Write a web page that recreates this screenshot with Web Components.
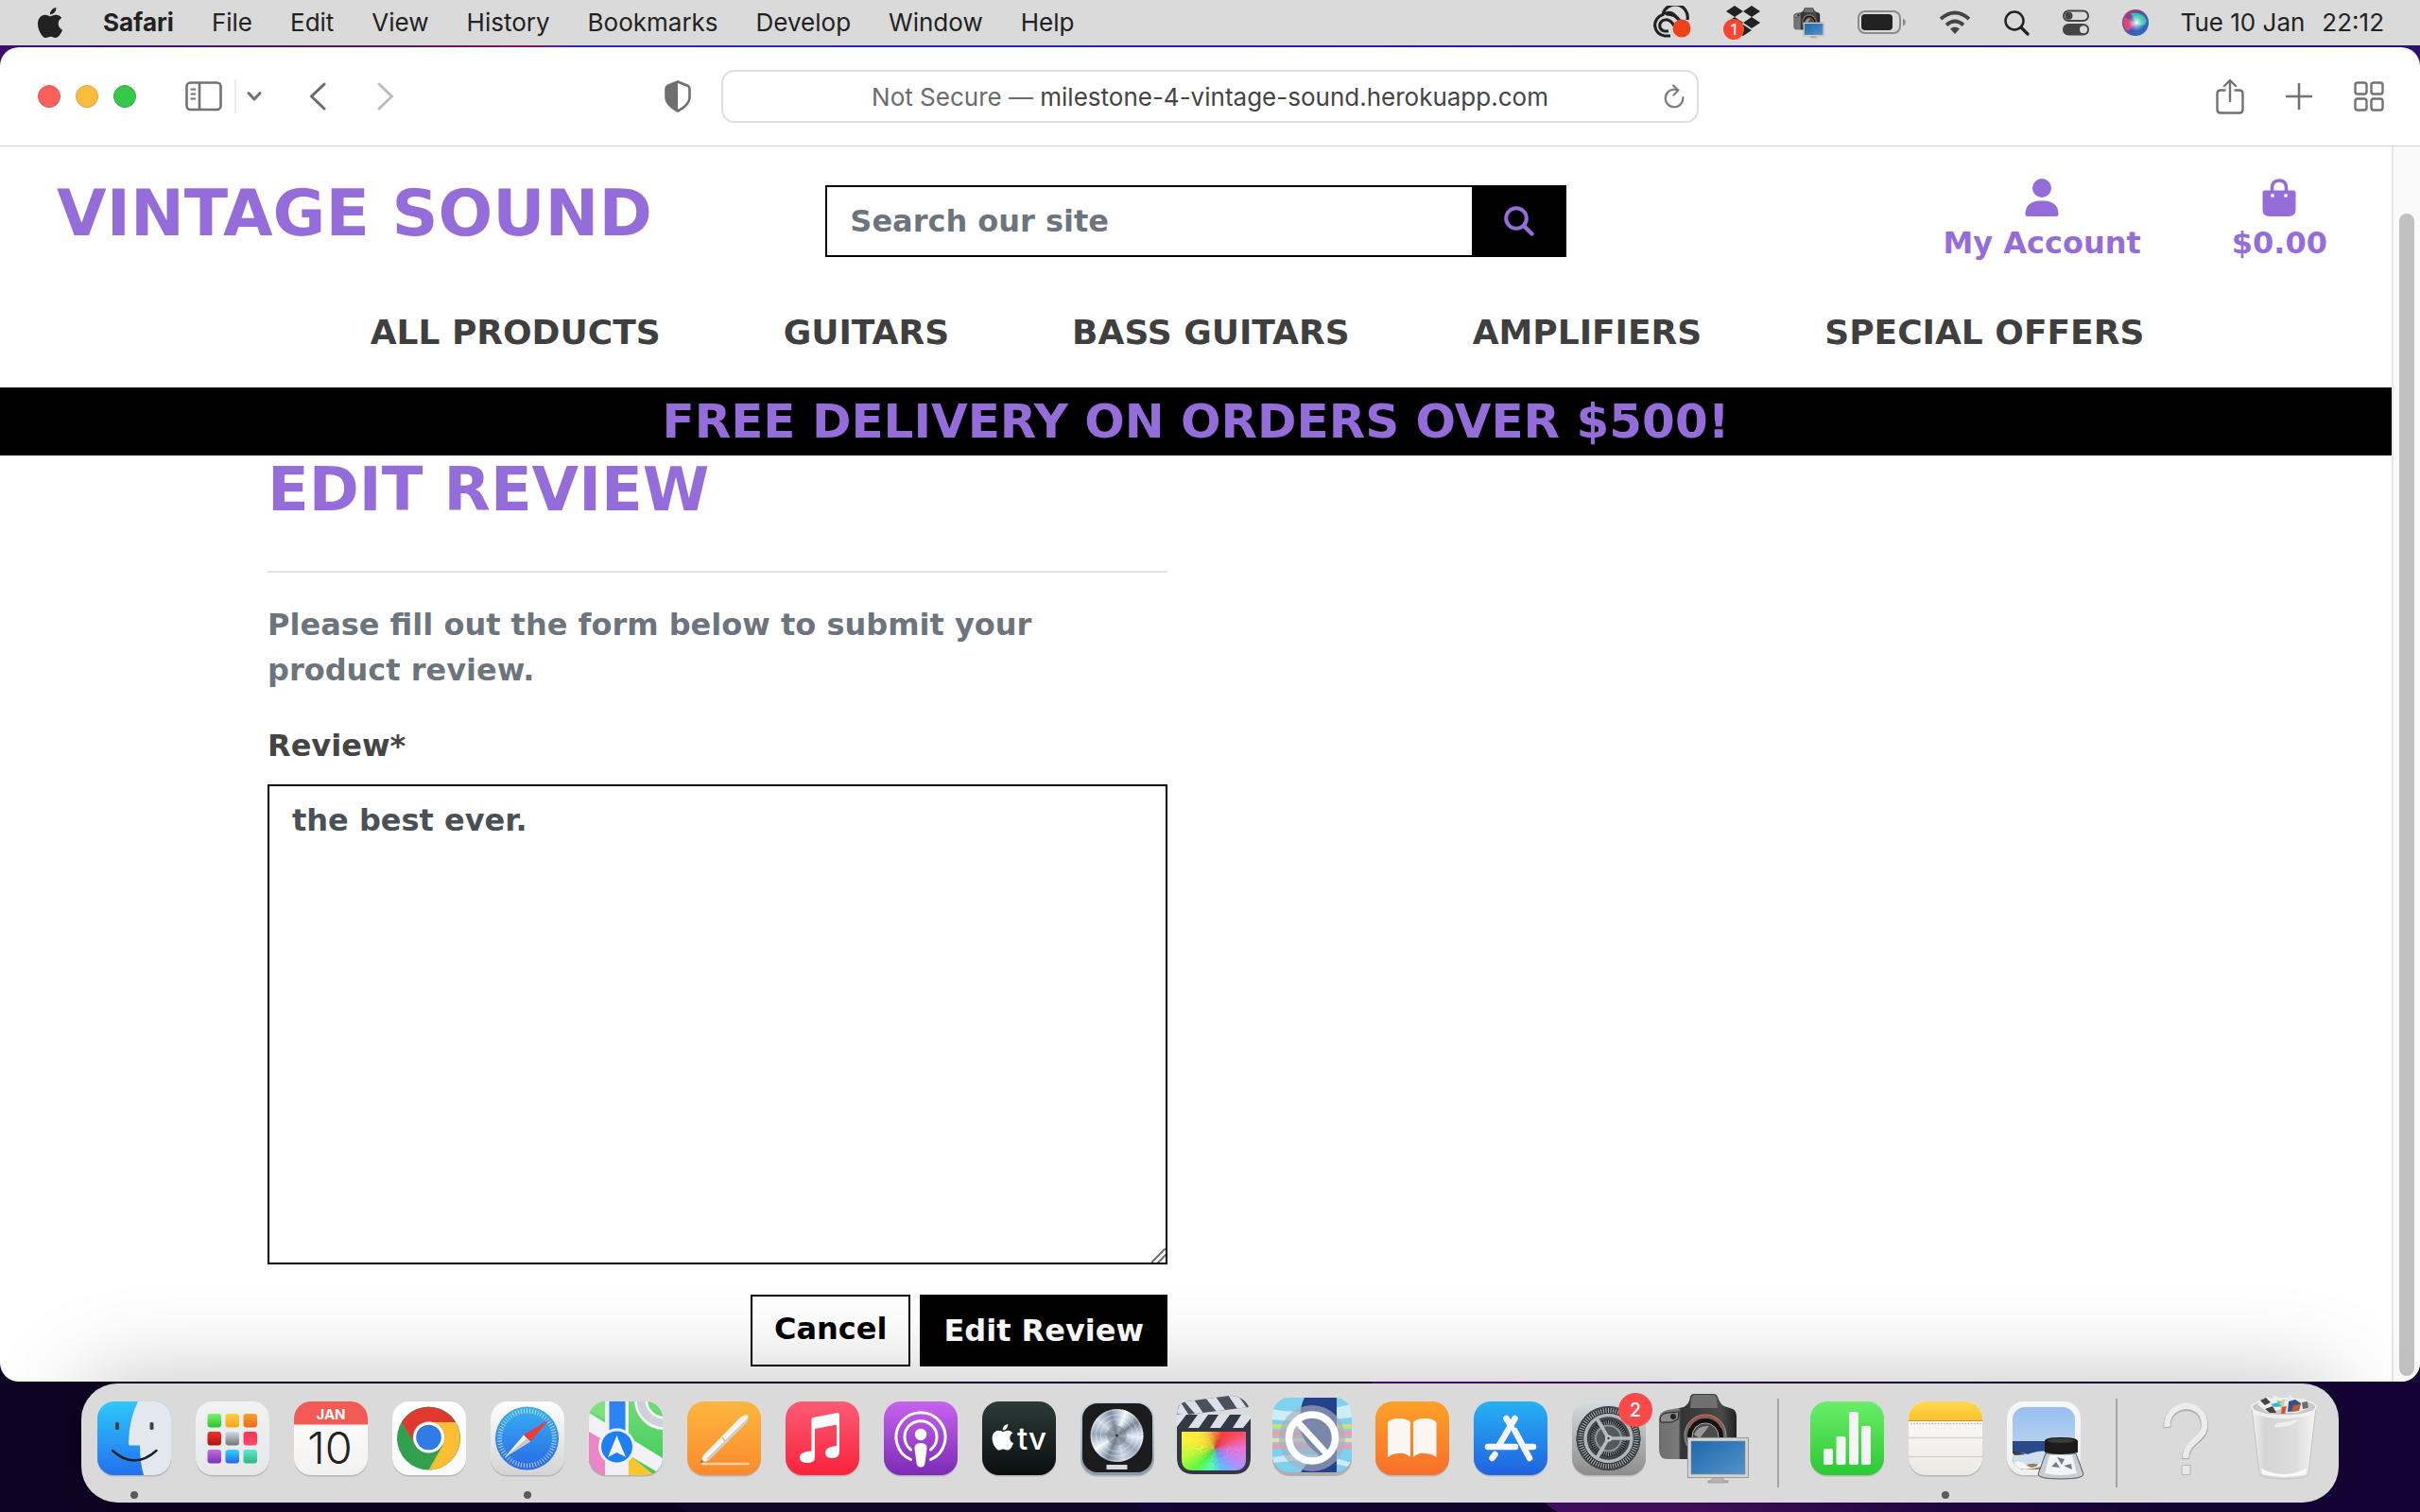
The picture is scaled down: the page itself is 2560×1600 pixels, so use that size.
<!DOCTYPE html>
<html lang="en">
<head>
<meta charset="utf-8">
<title>Vintage Sound</title>
<style>
  html, body { margin: 0; height: 100%; }
  body { font-family: Inter, "Liberation Sans", sans-serif; }
</style>
</head>
<body>
<mac-desktop>
  <mac-menubar slot="menu"></mac-menubar>
  <browser-window>
    <browser-toolbar slot="toolbar"></browser-toolbar>
    <shop-header></shop-header>
    <promo-banner>FREE DELIVERY ON ORDERS OVER $500!</promo-banner>
    <review-form></review-form>
  </browser-window>
  <mac-dock slot="dock"></mac-dock>
</mac-desktop>

<script>
const APPLE = '<path d="M12.152 6.896c-.948 0-2.415-1.078-3.96-1.04-2.04.027-3.91 1.183-4.961 3.014-2.117 3.675-.546 9.103 1.519 12.09 1.013 1.454 2.208 3.09 3.792 3.039 1.52-.065 2.09-.987 3.935-.987 1.831 0 2.35.987 3.96.948 1.637-.026 2.676-1.48 3.676-2.948 1.156-1.688 1.636-3.325 1.662-3.415-.039-.013-3.182-1.221-3.22-4.857-.026-3.04 2.48-4.494 2.597-4.559-1.429-2.09-3.623-2.324-4.39-2.376-2-.156-3.675 1.09-4.61 1.09zM15.53 3.83c.843-1.012 1.4-2.427 1.245-3.83-1.207.052-2.662.805-3.532 1.818-.78.896-1.454 2.338-1.273 3.714 1.338.104 2.715-.688 3.559-1.701"/>';

const CAMERA = `
  <linearGradient id="cb" x2="1"><stop offset="0" stop-color="#6e6e6e"/><stop offset=".25" stop-color="#7a7a7a"/><stop offset=".28" stop-color="#333"/><stop offset=".8" stop-color="#4a4a4a"/><stop offset="1" stop-color="#222"/></linearGradient>
  <linearGradient id="cs" x2="1" y2="1"><stop offset="0" stop-color="#1c69ad"/><stop offset="1" stop-color="#5592c9"/></linearGradient>
  <path d="M1 38Q1 30 10 28L27 25Q33 22 34 14Q35 11 38 11H59Q62 11 63 14Q66 24 73 25L79 27Q83 29 83 36V80H10Q1 80 1 70Z" fill="url(#cb)"/>
  <path d="M35 15Q36 12 39 12H58Q61 12 62 16L63 26H34Z" fill="#707070"/>
  <path d="M2 38Q3 32 10 31L22 30L21 38L14 41H3Z" fill="#8b8b8b" stroke="#222"/><circle cx="16" cy="35" r="3" fill="#222"/>
  <circle cx="50" cy="55" r="22" fill="#666" stroke="#999" stroke-width="1"/><circle cx="50" cy="56" r="19" fill="#111"/>
  <path d="M33 47Q38 34 50 34Q62 34 67 47" fill="none" stroke="#d5492a" stroke-width="1.6"/>
  <circle cx="50" cy="56" r="14" fill="#4b4b4b" stroke="#aaa" stroke-width="1"/><path d="M38 54Q42 44 54 45L44 58Z" fill="#999"/>
  <path d="M58 99H68L70 103H74V105H53V103H56Z" fill="#b5b5b5" stroke="#888" stroke-width=".6"/>
  <rect x="31.500" y="57.500" width="64" height="42" fill="#d4d4d4" stroke="#999"/><rect x="35" y="61" width="57" height="35" fill="url(#cs)" stroke="#888" stroke-width=".6"/>`;

const ICONS = {
  apple: [32, 32, '0 0 24 24', `<g fill="#222">${APPLE}</g>`],
  cc: [42, 36, '0 0 42 36', `<g fill="none" stroke="#222" stroke-width="3.200"><path d="M20 32H14A11.500 11.500 0 0 1 12 9.500A13 13 0 0 1 38 15"/><path d="M14 9Q21 4 28 14"/><path d="M18 27H14.500A6 6 0 0 1 15 15Q19 14 24 21"/><path d="M16 9Q25 9 30 16"/></g><circle cx="32" cy="24" r="9.500" fill="#ee421b"/>`],
  dropbox: [40, 36, '0 0 40 36', `<g fill="#222"><path d="M12 0l9 6-9 6-9-6zM30 0l9 6-9 6-9-6zM12 12l9 6-9 6-9-6zM30 12l9 6-9 6-9-6zM21 20l9 6-9 6-9-6z"/></g><circle cx="11" cy="25" r="11" fill="#fb452e"/><text x="11" y="31" text-anchor="middle" font-family="Inter, sans-serif" font-size="16" font-weight="500" fill="#fff">1</text>`],
  camera: [34, 34, '0 8 100 100', CAMERA],
  battery: [52, 26, '0 0 52 26', `<rect x="1" y="1" width="44" height="23" rx="7" fill="none" stroke="#8b8b8b" stroke-width="2"/><rect x="4" y="4" width="33" height="17" rx="4" fill="#222"/><path d="M48 8.500Q51 10 51 12.500T48 16.500Z" fill="#8b8b8b"/>`],
  wifi: [34, 26, '0 0 34 26', `<g fill="none" stroke="#444" stroke-width="4"><path d="M2 9Q17-4 32 9"/><path d="M8 15.500Q17 7.500 26 15.500"/></g><path d="M17 25L12 19.500Q17 15.500 22 19.500Z" fill="#444"/>`],
  spot: [28, 28, '0 0 28 28', `<circle cx="12" cy="12" r="9.500" fill="none" stroke="#222" stroke-width="2.500"/><path d="M19 19L26 26" stroke="#222" stroke-width="3.200" stroke-linecap="round"/>`],
  control: [30, 28, '0 0 30 28', `<rect x="2" y="1.500" width="26" height="10.500" rx="5.250" fill="none" stroke="#444" stroke-width="2"/><circle cx="7.500" cy="6.700" r="4" fill="#444"/><rect x="1" y="15" width="28" height="12.500" rx="6.250" fill="#444"/><circle cx="23" cy="21.200" r="4" fill="#dadada"/>`],
  siri: [28, 28, '0 0 28 28', `<defs><linearGradient id="a" x2="1" y2="1"><stop offset="0" stop-color="#d52f5e"/><stop offset=".4" stop-color="#5a4fa0"/><stop offset="1" stop-color="#1b73d4"/></linearGradient><radialGradient id="b"><stop offset="0" stop-color="#fff"/><stop offset="1" stop-color="#8ce8ee" stop-opacity="0"/></radialGradient></defs><circle cx="14" cy="14" r="14" fill="url(#a)"/><path d="M9 4Q22 2 26 12Q24 20 15 15Z" fill="#38c3a4"/><path d="M3 8Q8 12 14 14Q8 24 4 22Q-1 15 3 8" fill="#e0437d"/><circle cx="15" cy="14" r="9" fill="url(#b)"/>`],
  sidebar: [40, 32, '0 0 40 32', `<g fill="none" stroke="#727272" stroke-width="2.600"><rect x="1.500" y="1.500" width="36" height="28.500" rx="4"/><path d="M15 2V30"/><path d="M5.500 8.500H11M5.500 13.500H11M5.500 18.500H11" stroke-width="2"/></g>`],
  chevron: [16, 12, '0 0 16 12', '<path d="M2 2.500L8 9L14 2.500" fill="none" stroke="#727272" stroke-width="3" stroke-linecap="round" stroke-linejoin="round"/>'],
  back: [18, 30, '0 0 18 30', '<path d="M16 2L2.500 15L16 28" fill="none" stroke="#6b6b6b" stroke-width="3" stroke-linecap="round" stroke-linejoin="round"/>'],
  forward: [18, 30, '0 0 18 30', '<path d="M2 2L15.500 15L2 28" fill="none" stroke="#bcbcbc" stroke-width="3" stroke-linecap="round" stroke-linejoin="round"/>'],
  shield: [28, 34, '0 0 28 34', '<path d="M14 1.500L25 6Q26.500 7 26.500 9V18Q26.500 26 14 32.500Q1.500 26 1.500 18V9Q1.500 7 3 6Z" fill="none" stroke="#6f6f6f" stroke-width="2.600"/><path d="M14 1.500V32.500Q1.500 26 1.500 18V9Q1.500 7 3 6Z" fill="#6f6f6f"/>'],
  reload: [22, 26, '0 0 22 26', '<path d="M13.500 6A9.300 9.300 0 1 0 20.300 14" fill="none" stroke="#7c7c7c" stroke-width="2.200" stroke-linecap="round"/><path d="M10 1.500L15.500 6.500L10.500 11.500" fill="none" stroke="#7c7c7c" stroke-width="2.200" stroke-linecap="round" stroke-linejoin="round"/>'],
  share: [30, 38, '0 0 30 38', '<g fill="none" stroke="#727272" stroke-width="2.400" stroke-linecap="round" stroke-linejoin="round"><path d="M9.500 12.500H5Q1.500 12.500 1.500 16V33Q1.500 36.500 5 36.500H25Q28.500 36.500 28.500 33V16Q28.500 12.500 25 12.500H20.500"/><path d="M15 24V2M9 8L15 2L21 8"/></g>'],
  plus: [28, 28, '0 0 28 28', '<path d="M14 1V27M1 14H27" stroke="#727272" stroke-width="2.600" stroke-linecap="round"/>'],
  tabs: [32, 32, '0 0 32 32', '<g fill="none" stroke="#727272" stroke-width="2.400"><rect x="1.500" y="1.500" width="12" height="12" rx="2.500"/><rect x="18.500" y="1.500" width="12" height="12" rx="2.500"/><rect x="1.500" y="18.500" width="12" height="12" rx="2.500"/><rect x="18.500" y="18.500" width="12" height="12" rx="2.500"/></g>'],
  search: [32, 32, '0 0 32 32', '<circle cx="13" cy="13" r="10.800" fill="none" stroke="#956ddb" stroke-width="4"/><path d="M21 21L29.500 29.500" stroke="#956ddb" stroke-width="4.400" stroke-linecap="round"/>'],
  user: [36, 40, '0 0 36 40', '<circle cx="18" cy="10" r="10" fill="#956ddb"/><path d="M14.500 23.500H21.500Q35.500 25 35.500 37.500Q35.500 40 33 40H3Q.5 40 .5 37.500Q.5 25 14.500 23.500Z" fill="#956ddb"/>'],
  bag: [36, 40, '0 0 36 40', '<path d="M10.500 17V10Q10.500 2 18 2T25.500 10V17" fill="none" stroke="#956ddb" stroke-width="3.600"/><path d="M3 12.500H33Q35.500 12.500 35.500 15V32.500Q35.500 40 28 40H8Q.5 40 .5 32.500V15Q.5 12.500 3 12.500Z" fill="#956ddb"/><circle cx="11" cy="18" r="1.900" fill="#fff"/><circle cx="25" cy="18" r="1.900" fill="#fff"/>']
};

/* Shapes for the dock. Each is drawn on a 104 x 126 cell; tile() shifts to the rounded 78px tile. */
const grad = (id, a, b) => `<linearGradient id="${id}" x2="0" y2="1"><stop offset="0" stop-color="${a}"/><stop offset="1" stop-color="${b}"/></linearGradient>`;
const tile = (a, b, inner) => `<defs>${grad('t', a, b)}<clipPath id="c"><rect width="78" height="78" rx="18"/></clipPath></defs>
  <g transform="translate(13 19)"><rect y="1.500" width="78" height="78" rx="18" fill="#000" opacity=".16"/><rect width="78" height="78" rx="18" fill="url(#t)"/><g clip-path="url(#c)">${inner}</g></g>`;
const ticks = (cx, cy, r1, r2, n, color, w) => Array.from({length: n}, (_, i) => {
  const a = i * 2 * Math.PI / n, c = Math.cos(a), s = Math.sin(a);
  return `<path d="M${cx + r1 * c} ${cy + r1 * s}L${cx + r2 * c} ${cy + r2 * s}" stroke="${color}" stroke-width="${w}"/>`;
}).join('');
const wedges = (cx, cy, r, n, color) => Array.from({length: n}, (_, i) => {
  const a = i * 2 * Math.PI / n, b = (i + 1.3) * 2 * Math.PI / n;
  return `<path d="M${cx} ${cy}L${cx + r * Math.cos(a)} ${cy + r * Math.sin(a)}L${cx + r * Math.cos(b)} ${cy + r * Math.sin(b)}Z" fill="${color(i / n)}"/>`;
}).join('');
const mix = stops => t => {
  const k = t * (stops.length - 1), i = Math.floor(k), f = k - i;
  return 'rgb(' + stops[i].map((v, j) => Math.round(v + ((stops[i + 1] || stops[i])[j] - v) * f)).join(',') + ')';
};
const spectrum = mix([[230,120,220],[175,145,255],[105,185,255],[90,255,190],[90,250,70],[190,250,60],[255,240,60],[255,230,60],[255,160,60],[255,60,60],[255,75,100],[230,120,220]]);
const steel = mix([[235,242,250],[150,165,185],[205,215,228],[120,135,155],[245,250,255],[150,165,185],[210,220,230],[130,145,165],[245,250,255],[120,135,155],[235,242,250]]);

const padColors = [['#7df06c','#2cc32e'],['#ffd33a','#f9a224'],['#fba12c','#e9681f'],['#f2332c','#ad1414'],['#cfdbe2','#6e7678'],['#fc3158','#fb4a6a'],['#c46be8','#7a34b0'],['#2fd5fc','#2763f0'],['#64e4dc','#2bb874']];

const APPS = {
  Finder: tile('#2fc9fa', '#2270ef', `<path d="M43 0Q33 20 33 45Q33 46.500 35 46.500H45Q45 65 49 78H78V0Z" fill="#e3e8ef"/><g fill="#3d444b"><rect x="19" y="22" width="4" height="8" rx="1.500"/><rect x="55.500" y="22" width="4" height="8" rx="1.500"/></g><path d="M16 52Q39 73 62.500 52" fill="none" stroke="#1b2128" stroke-width="2.400" stroke-linecap="round"/>`),
  Launchpad: tile('#f0f2f3', '#e6e7e8', padColors.map((p, i) => `<defs>${grad('p' + i, p[0], p[1])}</defs><rect x="${12.5 + (i % 3) * 19}" y="${13 + Math.floor(i / 3) * 19}" width="14.500" height="14.500" rx="3" fill="url(#p${i})"/>`).join('')),
  Calendar: tile('#ffffff', '#f4f2f0', `<rect width="78" height="24.500" fill="#f45a55"/><text x="39" y="19" text-anchor="middle" font-family="Inter, sans-serif" font-size="15" font-weight="700" fill="#fff">JAN</text><text x="38" y="66" text-anchor="middle" font-family="Inter, sans-serif" font-size="47" font-weight="300" fill="#222">10</text>`),
  Chrome: tile('#ffffff', '#fafafa', `<circle cx="38.500" cy="39" r="33.500" fill="#33a04f"/><path d="M38.500 39L10 22A33.500 33.500 0 0 1 67 22Z" fill="#e0392f"/><path d="M10 22L26 48L38 28Z" fill="#e0392f"/><path d="M38.500 22H67A33.500 33.500 0 0 1 38.500 72.500L53 47Z" fill="#fbbd31"/><circle cx="38.500" cy="38" r="16.500" fill="#fff"/><circle cx="38.500" cy="38" r="13.300" fill="#2f7ce8"/>`),
  Safari: tile('#ffffff', '#d4d4d4', `<defs>${grad('s', '#36b0f2', '#2a68e6')}</defs><circle cx="38.500" cy="39" r="33.500" fill="url(#s)"/>${ticks(38.5, 39, 26.5, 31.500, 60, '#d5eaff', .9)}<path d="M62 19L35 35.500L42 42.500Z" fill="#ee3b34"/><path d="M15 59L35 35.500L42 42.500Z" fill="#f2f2f2"/><path d="M15 59L42 42.500L38.500 39Z" fill="#c4c9ce"/>`),
  Maps: tile('#6fdc77', '#3fca58', `<path d="M0 30L22 44V78H0Z" fill="#e886c8"/><path d="M0 12L78 60V78L0 32Z" fill="#f1f1f6"/><path d="M0 0H17V19L0 10Z" fill="#7de07c"/><rect x="17" width="25" height="78" fill="#eef0f4"/><rect x="21.500" width="17" height="40" fill="#2b83f4"/><path d="M42 56L69 78H42Z" fill="#fbc52e"/><circle cx="80" cy="-2" r="25" fill="none" stroke="#fff" stroke-width="14"/><circle cx="80" cy="-2" r="25" fill="none" stroke="#cdd1da" stroke-width="9"/><circle cx="29.500" cy="48" r="19.500" fill="#eff1f5"/><circle cx="29.500" cy="48" r="16.500" fill="#1e7ff2"/><path d="M29.500 36L39 59L29.500 54L20 59Z" fill="#f4f4f4"/>`),
  Pages: tile('#fdb73e', '#fb8a2e', `<path d="M16 66H65" stroke="#ffd09b" stroke-width="2.500" stroke-linecap="round"/><path d="M13 66L17 57L56 17Q62 13 64 15Q66 18 60 25L23 62Z" fill="#f7f5f2"/><path d="M37 38L41 43" stroke="#a9a39d" stroke-width="1.200"/><path d="M13 66L15 61L18 64Z" fill="#8a7a68"/><path d="M23 62L60 25Q64 20 64.500 17L20 61Z" fill="#d0ccc8"/>`),
  Music: tile('#fb5c74', '#fa233b', `<path d="M27.500 18.500Q27.500 17.500 29 17L55 12Q57 12 57 13.500V53Q57 60 49.500 60Q42 60 42 54Q42 48 54 47V24.500L31 29V59Q31 65 23 65Q15 65 15 59Q15 53 27.500 52.500Z" fill="#fff"/>`),
  Podcasts: tile('#c763ee', '#7a2bb5', `<g fill="none" stroke="#fff" stroke-width="3" stroke-linecap="round"><path d="M28.500 61.500A26 26 0 1 1 49.500 61.500"/><path d="M28.500 51A17 17 0 1 1 49.500 51"/></g><circle cx="39" cy="35" r="6.200" fill="#fff"/><path d="M39 44Q46 44 45.500 50L43.500 65Q43 69.500 39 69.500T34.500 65L32.500 50Q32 44 39 44Z" fill="#fff"/>`),
  TV: tile('#2c3b37', '#0b0e0f', `<g transform="translate(8 24) scale(1.15)" fill="#fff">${APPLE}</g><text x="37" y="51" font-family="Inter, sans-serif" font-size="33" font-weight="500" fill="#fff">tv</text>`),
  Logic: tile('#c9d8e6', '#8c99a8', `<rect x="2" y="2" width="74" height="73" rx="16" fill="#1c1c1c"/>${wedges(38.5, 36, 28, 60, steel)}<g fill="none" stroke="#fff" opacity=".4"><circle cx="38.500" cy="36" r="27"/><circle cx="38.500" cy="36" r="22"/><circle cx="38.500" cy="36" r="17"/></g><circle cx="38.500" cy="36" r="10.500" fill="#77808c" opacity=".55"/><circle cx="38.500" cy="36" r="1.300" fill="#222"/><rect x="27.500" y="67" width="22" height="5" fill="#d7dbe2"/>`),
  'Final Cut': `<defs><clipPath id="m"><path d="M16 51H84V80Q84 92 72 92H28Q16 92 16 80Z"/></clipPath><clipPath id="k"><path d="M11 33L13 24Q15 20 22 19L66 13Q82 13 87 25L22 33Z"/></clipPath><clipPath id="l"><rect x="11" y="33" width="78" height="14"/></clipPath></defs><path d="M11 33H89V78Q89 96 71 96H29Q11 96 11 78Z" fill="#343844"/><g clip-path="url(#k)"><rect x="10" y="12" width="80" height="22" fill="#4c505c"/><path d="M18 18L31 33H40L29 17ZM41 15L54 31H64L52 14ZM65 12L77 30H88L75 12ZM10 32L15 20L24 34Z" fill="#dbe0e9"/></g><g clip-path="url(#l)"><path d="M11 33H21L11 46ZM33 33H44L34 47H23ZM55 33H67L57 47H46ZM79 33H89V37L81 47H70Z" fill="#dbe0e9"/></g><g clip-path="url(#m)">${wedges(51, 69, 50, 90, spectrum)}</g>`,
  Blocked: `<defs>${grad('g', '#7fd3ef', '#7fd0ee')}<clipPath id="c"><rect x="8" y="15" width="84" height="79" rx="18"/></clipPath></defs><rect x="8" y="18" width="84" height="80" rx="18" opacity=".2"/><g clip-path="url(#c)"><rect x="8" y="15" width="84" height="79" fill="url(#g)"/><path d="M8 27Q40 34 92 22V36Q40 42 8 38Z" fill="#cdeef5"/><path d="M8 43H92V48H8Z" fill="#c6df7f"/><path d="M8 50H92V56H8Z" fill="#f1a0a8"/><path d="M8 58H92V62H8Z" fill="#f5dd9a"/><path d="M8 64H92V69H8Z" fill="#ed9db3"/><path d="M8 78Q50 70 92 84V89Q50 78 8 84Z" fill="#c9eaf6"/><path d="M42 15H76V94H38Q46 80 58 76Q36 60 37 40Q37 24 42 15Z" fill="#24418c"/></g><circle cx="50" cy="58" r="35" fill="#a9aebb" opacity=".65"/><circle cx="50" cy="57.500" r="24.500" fill="none" stroke="#fff" stroke-width="7.500"/><path d="M34 40L66 75" stroke="#fff" stroke-width="7"/>`,
  Books: tile('#fda128', '#f96f2b', `<path d="M13 22Q16 18 25 18Q34 18 37 22V59Q31 54 25 55Q18 55 13 59Z" fill="#fbf6f1"/><path d="M64.500 22Q61 18 52.500 18Q43 18 40 22V59Q46 54 52 55Q59 55 64.500 59Z" fill="#fbf6f1"/>`),
  'App Store': tile('#27b1f5', '#2062e0', `<g stroke="#f5f9ff" stroke-width="6.500" stroke-linecap="round"><path d="M34.500 18L40 27"/><path d="M43.500 18L27 46"/><path d="M43.500 31L59 60"/><path d="M15 48H44M55 48H63"/><path d="M22.500 56L19.500 60"/></g>`),
  Settings: tile('#d3dde4', '#8e8c89', `<circle cx="38.500" cy="39" r="34" fill="#22272a"/>${ticks(38.5, 39, 27, 32.500, 72, '#a9afb3', 1.2)}<circle cx="38.500" cy="39" r="33" fill="none" stroke="#454b4f" stroke-width="1.500"/><circle cx="38.500" cy="39" r="24.500" fill="#40464a" stroke="#b0b6ba" stroke-width="3.600"/><circle cx="38.500" cy="39" r="17.500" fill="none" stroke="#1b1e20" stroke-width="4"/>${ticks(38.5, 39, 15, 19, 48, '#8e9498', 1)}<circle cx="38.500" cy="39" r="13.500" fill="#53595d" stroke="#8f9599" stroke-width="2"/><path d="M38.500 39H63M38.500 39L26.500 18.500M38.500 39L26.500 59.500" stroke="#b5bbbf" stroke-width="3.600"/><circle cx="38.500" cy="39" r="3.600" fill="#c1c7cb"/><circle cx="38.500" cy="39" r="1.200" fill="#333"/>`) + `<circle cx="80" cy="28" r="18" fill="#fb4a48"/><text x="80" y="35" text-anchor="middle" font-family="Inter, sans-serif" font-size="20" font-weight="500" fill="#fff">2</text>`,
  Screenshot: CAMERA,
  Numbers: tile('#6bed69', '#2bc934', `<g fill="#f4f6f4"><rect x="14" y="50" width="10" height="17" rx="2"/><rect x="27.500" y="37" width="10" height="30" rx="2"/><rect x="41" y="11" width="10" height="56" rx="2"/><rect x="54" y="26" width="10" height="41" rx="2"/></g>`),
  Notes: tile('#ffffff', '#ece9e4', `<defs>${grad('n', '#fed954', '#fdc22b')}</defs><rect width="78" height="20" fill="url(#n)"/><path d="M0 20.500H78" stroke="#b0985c" stroke-width="1"/><path d="M2 23.500H78" stroke="#b9b7b3" stroke-width="1.600" stroke-dasharray="1.600 1.600"/><path d="M0 38.500H78M0 58.500H78" stroke="#d2d1ce" stroke-width="1.500"/>`),
  Preview: tile('#f8f8f8', '#f0f0f0', `<defs>${grad('y', '#92bdf0', '#cddff0')}<clipPath id="f"><rect x="6" y="6" width="66" height="66" rx="13"/></clipPath></defs><g clip-path="url(#f)"><rect width="78" height="78" fill="url(#y)"/><rect y="42" width="78" height="36" fill="#29498a"/><path d="M0 57Q14 52 22 56Q34 51 44 53L78 60V78H0Z" fill="#cfdfec"/><path d="M5 52L14 54L20 56L8 57Z" fill="#3c3a4b"/><path d="M10 76Q20 64 30 66Q38 68 44 78Z" fill="#987f62"/><path d="M6 66Q12 60 20 67T36 64V69Q20 74 6 70Z" fill="#f3f7fa"/></g>`) + `<path d="M54 74H86L94 96Q94 101 70 101T46 96Z" fill="#c9ced3" stroke="#55595e"/><path d="M58 76H82L87 95Q70 99 53 95Z" fill="#f2f6f8"/><path d="M66 78l8 2-3 6zM60 88l5-5 4 6zM73 87l8-2 1 6z" fill="#737b88"/><path d="M53 61Q53 57 70 57T88 61V73Q70 77 53 73Z" fill="#1b1b1b"/><ellipse cx="70" cy="60.500" rx="14" ry="2.500" fill="#3c3c3c"/>`,
  Missing: `<g fill="none" stroke="#aaa" stroke-width="8" transform="translate(0 1)"><path d="M28.500 46C27 18 68 16 68 44C68 60 48 60 48 79"/></g><path d="M28.500 46C27 18 68 16 68 44C68 60 48 60 48 79" fill="none" stroke="#ececec" stroke-width="6.500"/><rect x="44" y="86.500" width="9" height="10" rx="1" fill="#e8e8e8" stroke="#aaa" stroke-width=".8"/>`,
  Trash: `<defs><linearGradient id="w" x2="1"><stop offset="0" stop-color="#f4f4f4"/><stop offset=".2" stop-color="#d5d5d5"/><stop offset=".7" stop-color="#dedede"/><stop offset="1" stop-color="#f5f5f5"/></linearGradient></defs><path d="M14 25L22 95Q23 101 48 101T74 95L82 25Z" fill="url(#w)" stroke="#c4c4c4"/><ellipse cx="48" cy="25" rx="34" ry="9" fill="#c9c9c9" stroke="#f8f8f8" stroke-width="1.500"/><path d="M20 22L30 14L38 18L36 12L46 16L44 28L30 30Z" fill="#efefef"/><path d="M23 18L29 15L34 20L28 23ZM28 27L36 24L40 31L33 31Z" fill="#4b4340"/><path d="M48 20L55 12L60 18L70 16L75 26L62 31L50 31Z" fill="#ececec"/><path d="M34 22L42 20L46 24L38 25Z" fill="#21c0d4"/><path d="M53 19L60 17L66 21L62 29L52 30Z" fill="#35508c"/><path d="M58 23L66 22L64 29L56 30Z" fill="#c25d33"/><path d="M46 25L51 24L49 32L45 32Z" fill="#e0522f"/><path d="M40 18L46 19L44 22Z" fill="#7bd035"/><path d="M67 20L73 19L74 26L68 27Z" fill="#6b6b6b"/><path d="M18 32Q48 40 78 32" fill="none" stroke="#f2f2f2" stroke-width="2"/><path d="M38 46Q56 47 64 38Q52 41 40 42Z" fill="#efefef"/><path d="M24 90Q48 102 72 90L71 96Q48 102 25 96Z" fill="#fafafa"/>`
};

const define = (name, html, setup) => {
  const t = document.createElement('template');
  t.innerHTML = html;
  customElements.define(name, class extends HTMLElement {
    constructor() {
      super();
      this.attachShadow({mode: 'open'}).append(t.content.cloneNode(true));
    }
    connectedCallback() { if (setup) setup(this, this.shadowRoot); }
  });
};
const BASE = '<style>*{box-sizing:border-box}button,input,textarea{font:inherit;color:inherit;margin:0}button{border:0;background:none;padding:0;display:flex;align-items:center;justify-content:center}a{color:inherit;text-decoration:none}</style>';

define('ui-icon', '<style>:host{display:block;flex:none}svg{display:block}</style><span></span>', (el, root) => {
  const [w, h, box, body] = ICONS[el.getAttribute('name')];
  root.querySelector('span').innerHTML = `<svg width="${w}" height="${h}" viewBox="${box}" aria-hidden="true">${body}</svg>`;
});

define('mac-desktop', `${BASE}<style>
  :host{display:flex;flex-direction:column;gap:2px;height:100vh;padding-bottom:10px;box-sizing:border-box;overflow:hidden;
    background:
      linear-gradient(90deg,#3c0f6e 0,#3c0f6e 3%,#5a1568 16%,#7d1760 22%,#2f2ab0 24%,#2a1d9c 60%,#2b1170 100%) top/100% 90px no-repeat,
      linear-gradient(35deg,#0f0324 0,#0c0320 15%,#110530 15%,#110530 25%,#16063e 25%,#120430 34%,#4a0f6a 34%,#480f66 37%,#220748 43%,#160338 48%,#120330 100%)}
  ::slotted(*){flex:none}
  slot:not([name])::slotted(*){flex:1;min-height:0}
</style><slot name="menu"></slot><slot></slot><slot name="dock"></slot>`);

define('mac-menubar', `${BASE}<style>
  :host{display:flex;justify-content:space-between;align-items:center;height:48px;padding:0 38px 0 37px;box-sizing:border-box;background:#dadada;color:#222;font-size:26px;line-height:32px}
  nav,.status{display:flex;align-items:center}
  nav{gap:40px}
  nav b{font-weight:700}
  .status{gap:34px}
  .time{display:flex;gap:18px}
</style>
<nav aria-label="Menu bar"><button aria-label="Apple"><ui-icon name="apple"></ui-icon></button><button><b>Safari</b></button><button>File</button><button>Edit</button><button>View</button><button>History</button><button>Bookmarks</button><button>Develop</button><button>Window</button><button>Help</button></nav>
<div class="status"><ui-icon name="cc"></ui-icon><ui-icon name="dropbox"></ui-icon><ui-icon name="camera"></ui-icon><ui-icon name="battery"></ui-icon><ui-icon name="wifi"></ui-icon><ui-icon name="spot"></ui-icon><ui-icon name="control"></ui-icon><ui-icon name="siri"></ui-icon><div class="time"><span>Tue 10 Jan</span><span>22:12</span></div></div>`);

define('browser-window', `${BASE}<style>
  :host{display:flex;flex-direction:column;background:#fff;border-radius:20px;overflow:hidden}
  .view{flex:1;display:flex;min-height:0}
  .page{flex:1;min-width:0;overflow:hidden;font:bold 32px/48px "DejaVu Sans",sans-serif}
  .bar{width:30px;border-left:2px solid #e6e6e6;background:#fafafa;padding:71px 6px 6px;display:flex}
  .thumb{flex:1;border-radius:8px;background:#c1c1c1}
</style><slot name="toolbar"></slot><div class="view"><div class="page"><slot></slot></div><div class="bar"><div class="thumb"></div></div></div>`);

define('browser-toolbar', `${BASE}<style>
  :host{display:grid;grid-template-columns:1fr 1034px 1fr;align-items:center;column-gap:32px;height:105px;padding:0 38px 0 38px;box-sizing:border-box;border-bottom:1px solid #d2d2d2;font-size:26px;line-height:32px}
  .left,.right,.lights{display:flex;align-items:center}
  .lights{gap:16px;margin:0 52px 0 2px}
  .lights button{width:24px;height:24px;border-radius:50%;border:1px solid #e2524d}
  .sep{width:2px;height:36px;background:#ececec;margin:0 11px 0 12px}
  .back{margin:0 54px 0 50px}
  .shield{margin-left:auto}
  .address{display:grid;grid-template-columns:48px 1fr 48px;align-items:center;height:56px;border:2px solid #dfdfdf;border-radius:14px}
  .url{white-space:pre;color:#6b6b6b;padding-top:2px}
  .url span{color:#444}
  .right{justify-content:flex-end;gap:44px}
</style>
<div class="left"><div class="lights"><button aria-label="Close" style="background:#fe5f58"></button><button aria-label="Minimise" style="background:#febc3f;border-color:#dfa135"></button><button aria-label="Zoom" style="background:#35c84a;border-color:#2bac3d"></button></div>
<button aria-label="Sidebar"><ui-icon name="sidebar"></ui-icon></button><div class="sep"></div><button aria-label="Tab groups"><ui-icon name="chevron"></ui-icon></button><button class="back" aria-label="Back"><ui-icon name="back"></ui-icon></button><button aria-label="Forward"><ui-icon name="forward"></ui-icon></button><button class="shield" aria-label="Privacy report"><ui-icon name="shield"></ui-icon></button></div>
<div class="address"><i></i><button class="url">Not Secure — <span>milestone-4-vintage-sound.herokuapp.com</span></button><button aria-label="Reload"><ui-icon name="reload"></ui-icon></button></div>
<div class="right"><button aria-label="Share"><ui-icon name="share"></ui-icon></button><button aria-label="New tab"><ui-icon name="plus"></ui-icon></button><button aria-label="Tab overview"><ui-icon name="tabs"></ui-icon></button></div>`);

define('shop-header', `${BASE}<style>
  :host{display:block;color:#956ddb}
  .top{display:grid;grid-template-columns:1fr 1fr 1fr;align-items:start;padding-top:31px;height:173px}
  .logo{padding-left:60px;font-size:68px;line-height:80px;white-space:nowrap}
  form{display:flex;margin:10px 30px 0;height:76px}
  input{flex:1;min-width:0;border:2px solid #000;border-right:0;border-radius:0;padding:0 24px;background:#fff;color:#495057;outline:0}
  input::placeholder{color:#6c757d;opacity:1}
  form button{width:100px;background:#000}
  .links{display:flex;justify-content:flex-end;gap:96px;padding:3px 68px 0 0}
  .links a{display:flex;flex-direction:column;align-items:center;gap:4px;white-space:nowrap}
  nav{display:flex;justify-content:center;gap:130px;padding:0 0 34px 130px;color:#3f3f3f;font-size:36px;line-height:48px;white-space:nowrap}
</style>
<div class="top"><a class="logo" href="#">VINTAGE SOUND</a>
<form role="search"><input type="text" placeholder="Search our site" aria-label="Search our site"><button type="button" aria-label="Search"><ui-icon name="search"></ui-icon></button></form>
<div class="links"><a href="#"><ui-icon name="user"></ui-icon>My Account</a><a href="#"><ui-icon name="bag"></ui-icon>$0.00</a></div></div>
<nav aria-label="Shop"><a href="#">ALL PRODUCTS</a><a href="#">GUITARS</a><a href="#">BASS GUITARS</a><a href="#">AMPLIFIERS</a><a href="#">SPECIAL OFFERS</a></nav>`);

define('promo-banner', `<style>
  :host{display:block;background:#000;color:#956ddb;text-align:center;font-size:50px;line-height:72px}
</style><slot></slot>`);

define('review-form', `${BASE}<style>
  :host{display:block;width:80%;margin:0 auto}
  .col{width:50%;padding:0 30px}
  h2{margin:0;color:#956ddb;font-size:64px;line-height:72px}
  hr{margin:50px 0 31px;border:0;border-top:2px solid #e4e4e4}
  p{margin:0 0 32px;color:#6c757d}
  label{display:block;margin-bottom:17px;color:#444}
  textarea{display:block;width:100%;height:508px;border:2px solid #000;border-radius:0;padding:12px 24px;color:#495057;background:#fff;resize:vertical;outline:0}
  textarea::-webkit-resizer{background:linear-gradient(135deg,transparent 46%,#777 46%,#777 54%,transparent 54%,transparent 70%,#777 70%,#777 78%,transparent 78%)}
  .actions{display:flex;justify-content:flex-end;gap:10px;margin-top:32px}
  .actions>*{height:76px;padding:10px 23px;border:2px solid #000;color:#000}
  .actions button{background:#000;color:#fff}
</style>
<div class="col"><h2>EDIT REVIEW</h2><hr><p>Please fill out the form below to submit your product review.</p>
<form><label for="review">Review*</label><textarea id="review">the best ever.</textarea>
<div class="actions"><a href="#">Cancel</a><button type="button">Edit Review</button></div></form></div>`);

define('dock-item', `${BASE}<style>
  :host{display:block;width:104px;height:126px;position:relative}
  button{display:block;width:104px;height:126px}
  svg{display:block}
  :host([running])::after{content:"";position:absolute;left:48px;bottom:4px;width:8px;height:8px;border-radius:50%;background:#5a5a5a}
</style><button></button>`, (el, root) => {
  const b = root.querySelector('button'), n = el.getAttribute('app');
  b.setAttribute('aria-label', n);
  b.innerHTML = `<svg width="104" height="126" viewBox="0 0 104 126" aria-hidden="true">${APPS[n]}</svg>`;
});

const item = n => `<dock-item app="${n}"${['Finder', 'Safari', 'Notes'].includes(n) ? ' running' : ''}></dock-item>`;
const names = Object.keys(APPS);
define('mac-dock', `${BASE}<style>
  :host{display:flex;align-items:center;align-self:center;position:relative;height:126px;padding:0 2px 0 4px;box-sizing:border-box;background:#dadada;border-radius:38px;box-shadow:0 0 100px rgba(0,0,0,.26)}
  i{width:2px;height:94px;margin:0 20px 0 22px;background:#a3a3a3}
  i.wide{margin:0 24px}
</style>${names.slice(0, 17).map(item).join('')}<i></i>${names.slice(17, 20).map(item).join('')}<i class="wide"></i>${names.slice(20).map(item).join('')}`);
</script>
</body>
</html>
